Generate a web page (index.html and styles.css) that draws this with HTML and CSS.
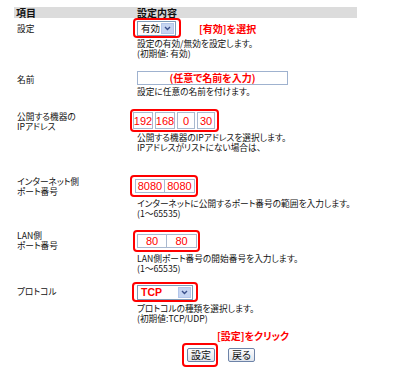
FILE: index.html
```html
<html>
  <head>
    <title>ポート公開設定</title>
    <meta charset="utf-8" />
    <link rel="stylesheet" href="styles.css">
  </head>
  <body>
    <div class="page">
      <div class="head">
        <div>項目</div>
        <div>設定内容</div>
      </div>

      <!-- 設定 -->
      <div class="row row-enable">
        <div class="label">設定</div>
        <div class="value">
          <div class="ctl-line">
            <span class="mark mark-enable">
              <span class="select select-enable">
                <span class="val">有効</span>
                <span class="arrow">
                  <svg width="7" height="5" viewBox="0 0 7 5"><path d="M1 1 L3.5 3.5 L6 1" fill="none" stroke="#3a4f8a" stroke-width="1.4"/></svg>
                </span>
              </span>
            </span>
            <span class="note">[有効]を選択</span>
          </div>
          <p class="desc">設定の有効/無効を設定します。<br />(初期値: 有効)</p>
        </div>
      </div>

      <!-- 名前 -->
      <div class="row row-name">
        <div class="label">名前</div>
        <div class="value">
          <div class="field">(任意で名前を入力)</div>
          <p class="desc">設定に任意の名前を付けます。</p>
        </div>
      </div>

      <!-- IPアドレス -->
      <div class="row row-ip">
        <div class="label">公開する機器の<br />IPアドレス</div>
        <div class="value">
          <span class="mark mark-ip">
            <span class="box ip">192</span>
            <span class="box ip">168</span>
            <span class="box ip small">0</span>
            <span class="box ip small">30</span>
          </span>
          <p class="desc">公開する機器のIPアドレスを選択します。<br />IPアドレスがリストにない場合は、</p>
        </div>
      </div>

      <!-- インターネット側ポート -->
      <div class="row row-wan">
        <div class="label">インターネット側<br />ポート番号</div>
        <div class="value">
          <span class="mark mark-port">
            <span class="box port">8080</span>
            <span class="box port joined">8080</span>
          </span>
          <p class="desc">インターネットに公開するポート番号の範囲を入力します。<br />(1～65535)</p>
        </div>
      </div>

      <!-- LAN側ポート -->
      <div class="row row-lan">
        <div class="label">LAN側<br />ポート番号</div>
        <div class="value">
          <span class="mark mark-port mark-lan">
            <span class="box port">80</span>
            <span class="box port joined">80</span>
          </span>
          <p class="desc">LAN側ポート番号の開始番号を入力します。<br />(1～65535)</p>
        </div>
      </div>

      <!-- プロトコル -->
      <div class="row row-proto">
        <div class="label">プロトコル</div>
        <div class="value">
          <span class="mark mark-proto">
            <span class="select select-proto">
              <span class="val">TCP</span>
              <span class="arrow">
                <svg width="7" height="5" viewBox="0 0 7 5"><path d="M1 1 L3.5 3.5 L6 1" fill="none" stroke="#3a4f8a" stroke-width="1.4"/></svg>
              </span>
            </span>
          </span>
          <p class="desc">プロトコルの種類を選択します。<br />(初期値:TCP/UDP)</p>
        </div>
      </div>

      <div class="footer">
        <div class="note click">[設定]をクリック</div>
        <div class="buttons">
          <span class="mark mark-btn"><span class="btn">設定</span></span>
          <span class="btn back">戻る</span>
        </div>
      </div>
    </div>
  </body>
</html>
```

FILE: styles.css
```css
body {
  margin: 0;
  background: #fff;
  font-family: "Noto Sans CJK JP", sans-serif;
  font-size: 8.7px;
  color: #111;
  font-feature-settings: "palt";
}
.page {
  width: 343px;
  margin: 7px 0 0 14px;
}
.head {
  display: grid;
  grid-template-columns: 123px 1fr;
  height: 11px;
  background: #dcdcdc;
  font-weight: bold;
  font-size: 10px;
  line-height: 11px;
}
.head div:first-child {
  padding-left: 2px;
}
.row {
  display: grid;
  grid-template-columns: 123px 1fr;
}
.label {
  padding-left: 3px;
  line-height: 10px;
  white-space: nowrap;
}
.desc {
  margin: 1px 0 0;
  line-height: 10px;
  white-space: nowrap;
}
.mark {
  display: inline-flex;
  border: 2px solid #f00;
  border-radius: 4px;
}
.ctl-line {
  display: flex;
  align-items: center;
}
.note {
  color: #f00;
  font-weight: bold;
  font-size: 10px;
  white-space: nowrap;
}
.ctl-line .note {
  margin-left: 18px;
}

/* select look */
.select {
  display: flex;
  align-items: center;
  box-sizing: border-box;
  height: 15px;
  border: 1px solid #7f9db9;
  background: #fff;
}
.select .val {
  flex: 1;
  padding-left: 3px;
  line-height: 13px;
  white-space: nowrap;
}
.arrow {
  display: flex;
  align-items: center;
  justify-content: center;
  box-sizing: border-box;
  width: 13px;
  height: 11px;
  margin-right: 1px;
  background: #c6d5f2;
  border: 1px solid #b3c6ea;
}
.select-enable {
  width: 39px;
  font-size: 9.5px;
}
.select-proto {
  width: 56px;
}
.select-proto .val {
  color: #f00;
  font-family: "Liberation Sans", sans-serif;
  font-weight: bold;
  font-size: 10.5px;
}

/* text inputs */
.field {
  box-sizing: border-box;
  width: 151px;
  height: 14px;
  border: 1px solid #9fb2cf;
  color: #f00;
  font-weight: bold;
  font-size: 10px;
  line-height: 12px;
  text-align: center;
}
.box {
  display: inline-flex;
  align-items: center;
  justify-content: center;
  box-sizing: border-box;
  border: 1px solid #a9b9d0;
  color: #f00;
  font-family: "Liberation Sans", sans-serif;
}
.ip {
  width: 20px;
  height: 17px;
  font-size: 11px;
}
.ip + .ip {
  margin-left: 2px;
}
.ip.small {
  width: 18px;
}
.port {
  width: 30px;
  height: 14px;
  font-size: 11px;
}
.port.joined {
  border-left: none;
}

/* row positions */
.row-enable {
  height: 53px;
}
.row-enable .label {
  padding-top: 6px;
}
.mark-enable {
  margin-left: -4px;
  padding: 1px 3px 0 2px;
}
.row-name {
  height: 38px;
}
.row-name .label {
  padding-top: 4px;
}
.row-name .desc {
  margin-top: 2px;
}
.row-ip {
  height: 66px;
}
.row-ip .label {
  padding-top: 3px;
}
.mark-ip {
  margin-left: -7px;
  padding: 1px 2px 1px 1px;
}
.row-wan {
  height: 55px;
}
.row-wan .label {
  padding-top: 2px;
}
.mark-port {
  margin-left: -7px;
  padding: 2px 1px 2px 3px;
}
.row-wan .desc,
.row-lan .desc,
.row-proto .desc {
  margin-top: 2px;
}
.row-lan {
  height: 52px;
}
.row-lan .label {
  padding-top: 1px;
}
.mark-lan {
  margin-left: -4px;
  padding-left: 2px;
}
.row-proto {
  height: 49px;
}
.row-proto .label {
  padding-top: 5px;
}
.mark-proto {
  margin-left: -5px;
  padding: 1px 3px 0 3px;
}

/* footer */
.footer {
  padding-left: 203px;
}
.click {
  line-height: 10px;
}
.buttons {
  display: flex;
  align-items: center;
  margin: 2px 0 0 -35px;
}
.mark-btn {
  padding: 3px 1px 3px 3px;
}
.btn {
  display: inline-block;
  box-sizing: border-box;
  height: 14px;
  padding: 0 3px;
  border: 1px solid #6d83a8;
  border-radius: 2px;
  background: linear-gradient(#fdfdfd, #dfe4ec);
  font-size: 10px;
  line-height: 12px;
}
.back {
  margin-left: 10px;
}
```
